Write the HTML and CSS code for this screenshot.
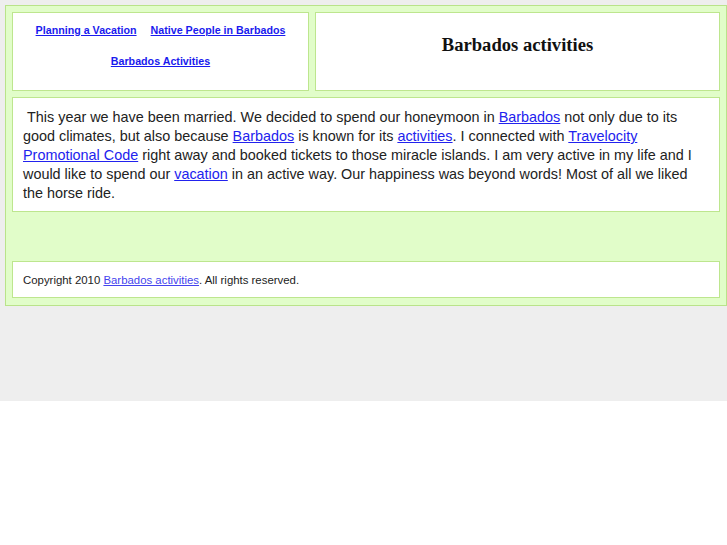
FILE: index.html
```
<!DOCTYPE html>
<html lang="en">
<head>
    <meta charset="UTF-8">
    <meta name="viewport" content="width=device-width, initial-scale=1.0">
    <title>Barbados activities</title>
    <link rel="stylesheet" href="styles.css">
</head>
<body>
    <div class="page">
        <div class="wrapper">
            <div class="top">
                <div class="menu">
                    <a href="#">Planning a Vacation</a>
                    <a href="#">Native People in Barbados</a>
                    <a href="#">Barbados Activities</a>
                </div>
                <div class="header">
                    <h1>Barbados activities</h1>
                </div>
            </div><!--top-->
            <div class="content">
                <p>&nbsp;This year we have been married. We decided to spend our honeymoon in <a href="#">Barbados</a> not only due to its good climates, but also because <a href="#">Barbados</a> is known for its <a href="#">activities</a>. I connected with <a href="#">Travelocity Promotional Code</a> right away and booked tickets to those miracle islands. I am very active in my life and I would like to spend our <a href="#">vacation</a> in an active way. Our happiness was beyond words! Most of all we liked the horse ride.</p>
            </div>
            <div class="footer">
                Copyright 2010 <a href="#">Barbados activities</a>. All rights reserved.
            </div>
        </div><!--wrapper-->
    </div>
</body>
</html>
```
FILE: styles.css
```
html, body {
    margin: 0;
    padding: 0;
    background: #fff;
    font-family: "Liberation Sans", Arial, sans-serif;
    color: #222;
}

* {
    box-sizing: border-box;
}

.page {
    background: #eeeeee;
    min-height: 401px;
    padding: 5px 0 0 5px;
}

.wrapper {
    display: flex;
    flex-direction: column;
    gap: 6px;
    padding: 6px 6px 7px;
    background: #e1fdc9;
    border: 1px solid #b9e38a;
}

.top {
    display: flex;
    gap: 6px;
    height: 79px;
}

.menu, .header, .content, .footer {
    background: #fff;
    border: 1px solid #bde68e;
}

.menu {
    width: 297px;
    display: flex;
    flex-wrap: wrap;
    justify-content: center;
    align-content: flex-start;
    column-gap: 14px;
    row-gap: 17px;
    padding: 10px 8px;
}

.menu a {
    font-size: 10.7px;
    line-height: 14px;
    font-weight: bold;
    color: #1a1aee;
}

.header {
    flex: 1;
    text-align: center;
}

.header h1 {
    margin: 21px 0 0;
    font-family: "Liberation Serif", "Times New Roman", serif;
    font-size: 18.6px;
    line-height: 22px;
    color: #111;
}

.content {
    padding: 10px 10px 8px;
}

.content p {
    margin: 0;
    font-size: 14.4px;
    line-height: 19px;
}

a {
    color: #2222ee;
}

.footer {
    margin-top: 43px;
    padding: 11px 10px 10px;
    font-size: 11.4px;
    line-height: 14px;
}

.footer a {
    color: #4444ee;
}
```
